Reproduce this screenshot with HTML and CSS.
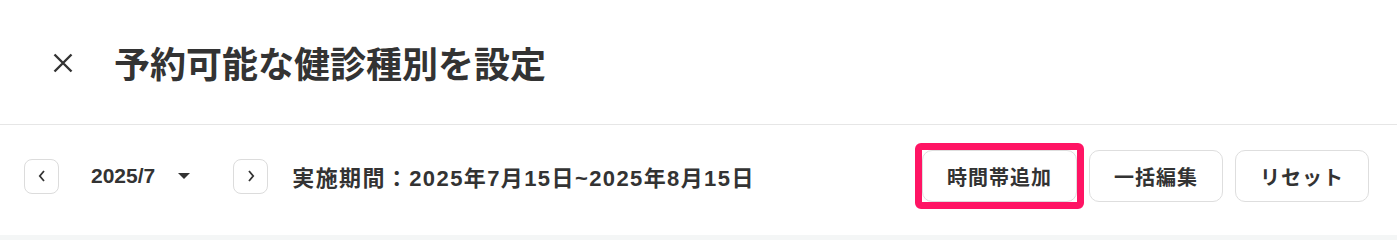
FILE: index.html
```html
<!DOCTYPE html>
<html lang="ja">
<head>
  <meta charset="UTF-8">
  <title>予約可能な健診種別を設定</title>
  <link rel="stylesheet" href="styles.css">
</head>
<body>
  <div id="header">
    <button class="close-btn" aria-label="閉じる">
      <svg width="20" height="20" viewBox="0 0 20 20"><path d="M1.5 1.5 L18.5 18.5 M18.5 1.5 L1.5 18.5" stroke="#333" stroke-width="2.4" fill="none"/></svg>
    </button>
    <h1 class="title">予約可能な健診種別を設定</h1>
  </div>

  <div id="toolbar">
    <button class="nav-btn" aria-label="前の月">
      <svg width="8" height="12" viewBox="0 0 8 12"><path d="M6 1 L1.8 6 L6 11" stroke="#333" stroke-width="1.8" fill="none"/></svg>
    </button>
    <div class="month">
      <span>2025/7</span>
      <span class="caret"></span>
    </div>
    <button class="nav-btn" aria-label="次の月">
      <svg width="8" height="12" viewBox="0 0 8 12"><path d="M2 1 L6.2 6 L2 11" stroke="#333" stroke-width="1.8" fill="none"/></svg>
    </button>
    <div class="period">実施期間：2025年7月15日~2025年8月15日</div>

    <div class="actions">
      <button class="action-btn highlight">時間帯追加</button>
      <button class="action-btn">一括編集</button>
      <button class="action-btn">リセット</button>
    </div>
  </div>

  <div id="content"></div>
</body>
</html>
```

FILE: styles.css
```css
body {
  margin: 0;
  background: #fff;
  color: #333;
  font-family: "Liberation Sans", "Noto Sans CJK JP", sans-serif;
}
button { font-family: inherit; color: inherit; cursor: pointer; }

#header {
  height: 124px;
  border-bottom: 1px solid #e6e6e6;
  display: flex;
  align-items: center;
  padding-left: 53px;
}
.close-btn {
  width: 20px;
  height: 20px;
  padding: 0;
  border: none;
  background: transparent;
  display: flex;
  margin-top: 2px;
}
.title {
  margin: 0 0 0 41px;
  font-family: "Noto Sans CJK JP", sans-serif;
  font-size: 36px;
  line-height: 1;
  font-weight: bold;
  color: #333;
}

#toolbar {
  display: flex;
  align-items: center;
  padding: 25px 28px 33px 24px;
}
.nav-btn {
  width: 35px;
  height: 35px;
  padding: 0;
  border: 1px solid #dcdcdc;
  border-radius: 8px;
  background: #fff;
  display: flex;
  align-items: center;
  justify-content: center;
}
.month {
  display: flex;
  align-items: center;
  gap: 23px;
  margin: 0 43px 0 32px;
  font-size: 21px;
  font-weight: bold;
}
.caret {
  width: 0;
  height: 0;
  border-left: 6px solid transparent;
  border-right: 6px solid transparent;
  border-top: 6px solid #333;
}
.period {
  margin-left: 24px;
  font-size: 22px;
  font-weight: bold;
  letter-spacing: 1.4px;
}

.actions {
  margin-left: auto;
  display: flex;
  gap: 12px;
}
.action-btn {
  height: 52px;
  padding: 0 24px;
  border: 1px solid #dedede;
  border-radius: 10px;
  background: #fff;
  font-size: 20px;
  font-weight: bold;
  letter-spacing: 1px;
}
.highlight { position: relative; }
.highlight::after {
  content: "";
  position: absolute;
  top: -8px;
  left: -8px;
  right: -8px;
  bottom: -8px;
  border: 7px solid #ff1464;
  border-radius: 6px;
}

#content {
  height: 5px;
  background: #f4f6f6;
}
```
